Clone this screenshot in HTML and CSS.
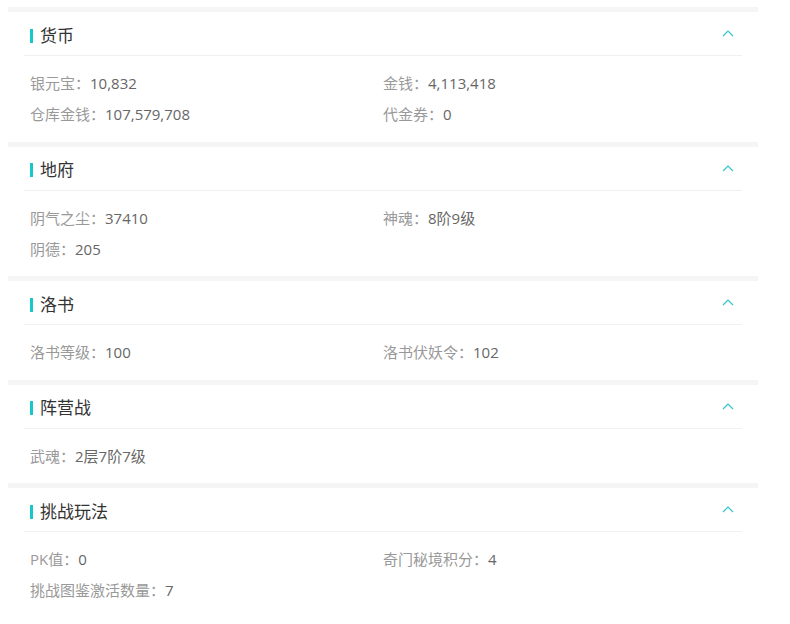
FILE: index.html
```html
<!DOCTYPE html>
<html lang="zh-CN">
<head>
  <meta charset="UTF-8" />
  <meta name="viewport" content="width=device-width, initial-scale=1.0">
  <title>角色信息</title>
  <link rel="stylesheet" href="styles.css">
</head>
<body>
  <div class="panel-list">
    <div class="panel">
      <div class="panel-head">
        <span class="panel-title">货币</span>
        <svg class="arrow" width="12" height="7" viewBox="0 0 12 7"><path d="M1 6 L6 1 L11 6" fill="none" stroke="#2fc6cc" stroke-width="1.2"/></svg>
      </div>
      <div class="panel-body">
        <div class="item"><span class="label">银元宝：</span><span class="value">10,832</span></div>
        <div class="item"><span class="label">金钱：</span><span class="value">4,113,418</span></div>
        <div class="item"><span class="label">仓库金钱：</span><span class="value">107,579,708</span></div>
        <div class="item"><span class="label">代金券：</span><span class="value">0</span></div>
      </div>
    </div>

    <div class="panel">
      <div class="panel-head">
        <span class="panel-title">地府</span>
        <svg class="arrow" width="12" height="7" viewBox="0 0 12 7"><path d="M1 6 L6 1 L11 6" fill="none" stroke="#2fc6cc" stroke-width="1.2"/></svg>
      </div>
      <div class="panel-body">
        <div class="item"><span class="label">阴气之尘：</span><span class="value">37410</span></div>
        <div class="item"><span class="label">神魂：</span><span class="value">8阶9级</span></div>
        <div class="item"><span class="label">阴德：</span><span class="value">205</span></div>
      </div>
    </div>

    <div class="panel">
      <div class="panel-head">
        <span class="panel-title">洛书</span>
        <svg class="arrow" width="12" height="7" viewBox="0 0 12 7"><path d="M1 6 L6 1 L11 6" fill="none" stroke="#2fc6cc" stroke-width="1.2"/></svg>
      </div>
      <div class="panel-body">
        <div class="item"><span class="label">洛书等级：</span><span class="value">100</span></div>
        <div class="item"><span class="label">洛书伏妖令：</span><span class="value">102</span></div>
      </div>
    </div>

    <div class="panel">
      <div class="panel-head">
        <span class="panel-title">阵营战</span>
        <svg class="arrow" width="12" height="7" viewBox="0 0 12 7"><path d="M1 6 L6 1 L11 6" fill="none" stroke="#2fc6cc" stroke-width="1.2"/></svg>
      </div>
      <div class="panel-body">
        <div class="item"><span class="label">武魂：</span><span class="value">2层7阶7级</span></div>
      </div>
    </div>

    <div class="panel">
      <div class="panel-head">
        <span class="panel-title">挑战玩法</span>
        <svg class="arrow" width="12" height="7" viewBox="0 0 12 7"><path d="M1 6 L6 1 L11 6" fill="none" stroke="#2fc6cc" stroke-width="1.2"/></svg>
      </div>
      <div class="panel-body">
        <div class="item"><span class="label">PK值：</span><span class="value">0</span></div>
        <div class="item"><span class="label">奇门秘境积分：</span><span class="value">4</span></div>
        <div class="item"><span class="label">挑战图鉴激活数量：</span><span class="value">7</span></div>
      </div>
    </div>
  </div>
</body>
</html>
```

FILE: styles.css
```css
body {
  font-family: "Open Sans", "Noto Sans CJK SC", sans-serif;
  background-color: #ffffff;
  margin: 0;
  padding: 0;
}
.panel-list {
  width: 750px;
  margin: 7px 0 0 8px;
  padding-top: 5px;
  background-color: #f5f5f5;
}
.panel {
  background-color: #ffffff;
  margin-bottom: 5px;
  padding: 0 16px;
}
.panel-head {
  height: 43px;
  display: flex;
  align-items: center;
  justify-content: space-between;
  border-bottom: 1px solid #f0f0f0;
  padding: 0 8px 0 6px;
}
.panel-title {
  font-size: 17px;
  line-height: 14px;
  margin-top: 4px;
  color: #333;
  border-left: 3px solid #16c8c8;
  padding-left: 7px;
}
.arrow {
  display: block;
}
.panel-body {
  display: grid;
  grid-template-columns: 1fr 1fr;
  padding: 12px 6px 11.5px;
}
.item {
  height: 31px;
  line-height: 31px;
  font-size: 15px;
  white-space: nowrap;
}
.label {
  color: #999;
}
.value {
  color: #666;
}
```
